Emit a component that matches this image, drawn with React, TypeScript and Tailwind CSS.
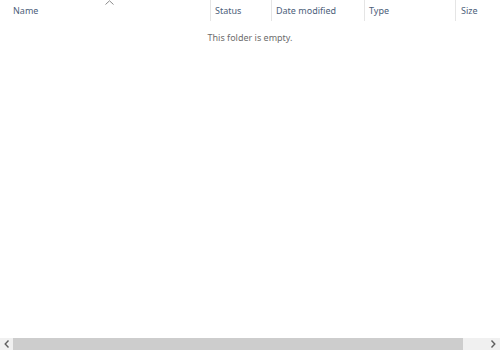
import React from "react";

export default function App() {
  const font = { fontFamily: '"Segoe UI", "Noto Sans", "Open Sans", sans-serif' };
  return (
    <div className="w-[500px] h-[350px] bg-white flex flex-col overflow-hidden" style={font}>
      <div className="relative flex h-[21px] text-[9px] text-[#4c607a]">
        <div className="w-[210px] pl-[13px] pt-[4px] leading-[14px]">Name</div>
        <div className="absolute left-[105px] top-[0px]">
          <svg width="9" height="5" viewBox="0 0 9 5">
            <path d="M0.5 4.5 L4.5 0.8 L8.5 4.5" fill="none" stroke="#8a8a8a" strokeWidth="1" />
          </svg>
        </div>
        <div className="w-[61px] border-l border-[#e5e5e5] pl-[4px] pt-[4px] leading-[14px]">Status</div>
        <div className="w-[93px] border-l border-[#e5e5e5] pl-[4px] pt-[4px] leading-[14px]">Date modified</div>
        <div className="w-[91px] border-l border-[#e5e5e5] pl-[4px] pt-[4px] leading-[14px]">Type</div>
        <div className="flex-1 border-l border-[#e5e5e5] pl-[5px] pt-[4px] leading-[14px]">Size</div>
      </div>
      <div className="flex-1 flex justify-center pt-[10px]">
        <div className="text-[9px] leading-[14px] text-[#6d6d6d]">This folder is empty.</div>
      </div>
      <div className="h-[12px] flex bg-[#f0f0f0]">
        <div className="w-[13px] flex items-center justify-center">
          <svg width="6" height="8" viewBox="0 0 6 8">
            <path d="M4.5 0.5 L1.2 4 L4.5 7.5" fill="none" stroke="#606060" strokeWidth="1.4" />
          </svg>
        </div>
        <div className="w-[450px] bg-[#cdcdcd]"></div>
        <div className="flex-1"></div>
        <div className="w-[14px] flex items-center justify-center">
          <svg width="6" height="8" viewBox="0 0 6 8">
            <path d="M1.5 0.5 L4.8 4 L1.5 7.5" fill="none" stroke="#606060" strokeWidth="1.4" />
          </svg>
        </div>
      </div>
    </div>
  );
}
